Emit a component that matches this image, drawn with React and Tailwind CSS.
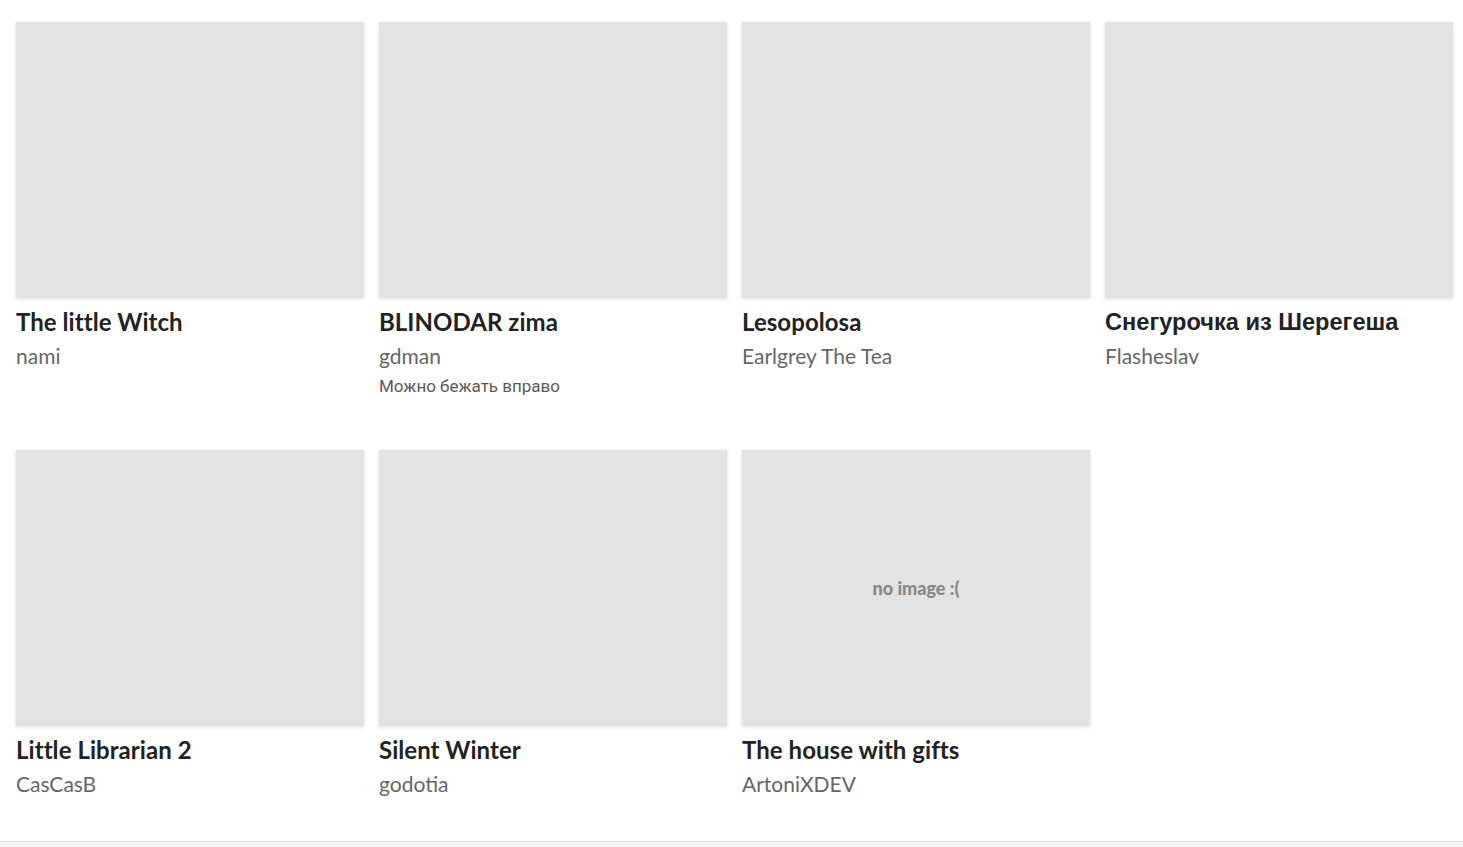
import React from "react";

const games = [
  { title: "The little Witch", author: "nami" },
  { title: "BLINODAR zima", author: "gdman", note: "Можно бежать вправо" },
  { title: "Lesopolosa", author: "Earlgrey The Tea" },
  { title: "Снегурочка из Шерегеша", author: "Flasheslav", cyr: true },
  { title: "Little Librarian 2", author: "CasCasB" },
  { title: "Silent Winter", author: "godotia" },
  { title: "The house with gifts", author: "ArtoniXDEV", noImage: true },
];

const GameCard = ({ game }) => (
  <div className="flex flex-col">
    <div className="h-[276px] bg-[#e3e3e3] shadow-[0_1px_4px_rgba(0,0,0,0.14)] flex items-center justify-center">
      {game.noImage && (
        <span className="text-[18px] font-black text-[#888]">no image :(</span>
      )}
    </div>
    {game.cyr ? (
      <h3 className="mt-[8px] text-[23.6px] leading-[32px] font-bold text-[#222] font-['Liberation_Sans',sans-serif]">
        {game.title}
      </h3>
    ) : (
      <h3 className="mt-[8px] text-[24px] leading-[32px] font-bold text-[#222] tracking-[0.05px]">
        {game.title}
      </h3>
    )}
    <div className="mt-[1px] text-[21px] leading-[34px] text-[#666]">{game.author}</div>
    {game.note && (
      <div className="mt-[1px] text-[17px] leading-[24px] text-[#5a5a5a] font-['Roboto',sans-serif]">
        {game.note}
      </div>
    )}
  </div>
);

export default function App() {
  return (
    <div className="min-h-[847px] bg-white font-['Lato','Noto_Sans',sans-serif] flex flex-col">
      <div className="pt-[22px] pl-[16px] pb-[40px] grid grid-cols-[repeat(4,348px)] gap-x-[15px] gap-y-[52px]">
        {games.map((g) => (
          <GameCard key={g.title} game={g} />
        ))}
      </div>
      <div className="flex-1 border-t border-[#dcdcdc] bg-[#f3f3f3]" />
    </div>
  );
}
